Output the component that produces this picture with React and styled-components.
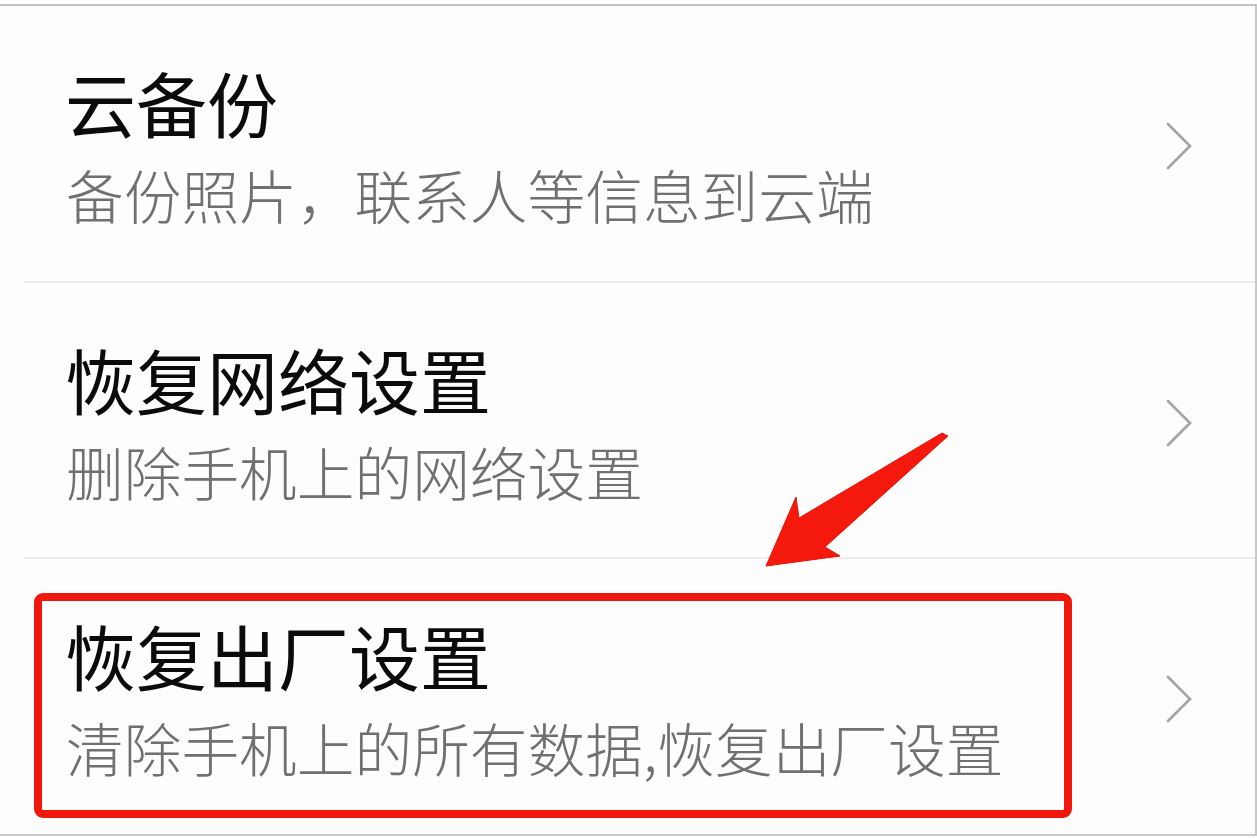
import React from "react";
import styled, { createGlobalStyle } from "styled-components";

const Global = createGlobalStyle`
  html, body { margin: 0; padding: 0; background: #ffffff; }
  body { font-family: "Noto Sans CJK SC", "Noto Sans", sans-serif; }
  * { box-sizing: border-box; }
`;

const Page = styled.div`
  position: relative;
  width: 1257px;
  height: 838px;
  padding-top: 4px;
  overflow: hidden;
`;

const Frame = styled.div`
  width: 1257px;
  height: 832px;
  background: #fdfdfd;
  border-top: 2px solid #c2c2c2;
  border-bottom: 2px solid #c8c8c8;
  border-right: 2px solid #c8c8c8;
  display: flex;
  flex-direction: column;
`;

const Row = styled.div`
  position: relative;
  margin-left: 24px;
  height: ${(p) => p.$h}px;
  border-bottom: ${(p) => (p.$last ? "none" : "2px solid #ececec")};
  display: flex;
  align-items: flex-start;
  justify-content: space-between;
  padding: 60px 62px 0 41px;
  flex-shrink: 0;
`;

const TextCol = styled.div`
  display: flex;
  flex-direction: column;
  gap: 28px;
  position: relative;
  z-index: 1;
`;

const Title = styled.div`
  font-size: 71px;
  line-height: 71px;
  color: #0b0b0b;
  font-weight: 400;
  white-space: nowrap;
`;

const Subtitle = styled.div`
  font-size: 57.7px;
  line-height: 58px;
  color: #707070;
  font-weight: 300;
  white-space: nowrap;
  margin-left: 1px;
`;

const Chevron = styled.svg`
  width: 28px;
  height: 48px;
  margin-top: 56px;
  flex-shrink: 0;
`;

const Highlight = styled.div`
  position: absolute;
  top: 34px;
  left: 10px;
  width: 1038px;
  height: 225px;
  border: 8px solid #f0170c;
  border-radius: 9px;
  pointer-events: none;
`;

const Arrow = styled.svg`
  position: absolute;
  left: 0;
  top: 0;
  width: 1257px;
  height: 838px;
  pointer-events: none;
`;

const items = [
  { title: "云备份", sub: "备份照片，联系人等信息到云端", h: 277 },
  { title: "恢复网络设置", sub: "删除手机上的网络设置", h: 276 },
  { title: "恢复出厂设置", sub: "清除手机上的所有数据,恢复出厂设置", h: 275, hl: true, last: true },
];

function ChevronIcon() {
  return (
    <Chevron viewBox="0 0 28 48">
      <polyline
        points="3,2 25,24 3,46"
        fill="none"
        stroke="#a3a3a3"
        strokeWidth="2.6"
        strokeLinecap="round"
        strokeLinejoin="miter"
      />
    </Chevron>
  );
}

export default function App() {
  return (
    <>
      <Global />
      <Page>
        <Frame>
          {items.map((it) => (
            <Row key={it.title} $h={it.h} $last={it.last}>
              {it.hl && <Highlight />}
              <TextCol>
                <Title>{it.title}</Title>
                <Subtitle>{it.sub}</Subtitle>
              </TextCol>
              <ChevronIcon />
            </Row>
          ))}
        </Frame>
        <Arrow viewBox="0 0 1257 838">
          <polygon
            points="766,566 840,556 825,547 948,436 942,433 799,518 796,497"
            fill="#f4190c"
            stroke="#e8140a"
            strokeWidth="1"
            strokeLinejoin="round"
          />
        </Arrow>
      </Page>
    </>
  );
}
